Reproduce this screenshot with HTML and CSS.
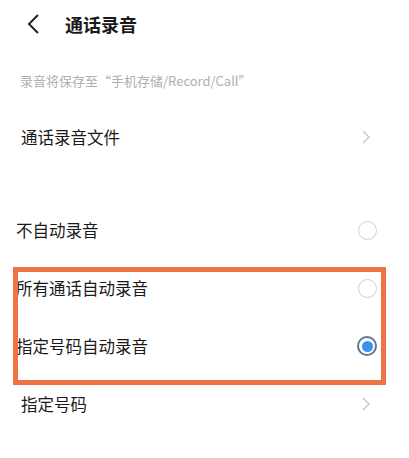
FILE: index.html
```html
<!DOCTYPE html>
<html>
<head>
    <meta charset="utf-8">
    <link rel="stylesheet" href="styles.css">
    <title>通话录音</title>
</head>
<body>
    <div class="page">
        <div class="header">
            <svg class="back" width="14" height="22" viewBox="0 0 14 22">
                <path d="M12 2 L3 11 L12 20" fill="none" stroke="#222" stroke-width="2"/>
            </svg>
            <p class="title">通话录音</p>
        </div>

        <p class="hint">录音将保存至“手机存储/Record/Call”</p>

        <div class="row link">
            <span class="label">通话录音文件</span>
            <svg class="chev" width="8" height="14" viewBox="0 0 8 14">
                <path d="M1 1 L7 7 L1 13" fill="none" stroke="#c4c4c4" stroke-width="1.3"/>
            </svg>
        </div>

        <div class="gap"></div>

        <div class="row opt">
            <span class="label">不自动录音</span>
            <span class="radio"></span>
        </div>
        <div class="row opt">
            <span class="label">所有通话自动录音</span>
            <span class="radio"></span>
        </div>
        <div class="row opt">
            <span class="label">指定号码自动录音</span>
            <span class="radio on"></span>
        </div>
        <div class="row link">
            <span class="label">指定号码</span>
            <svg class="chev" width="8" height="14" viewBox="0 0 8 14">
                <path d="M1 1 L7 7 L1 13" fill="none" stroke="#c4c4c4" stroke-width="1.3"/>
            </svg>
        </div>

        <!-- highlight box drawn over the two rows -->
        <div class="mark"></div>
    </div>
</body>
</html>
```

FILE: styles.css
```css
body{
    margin: 0;
    background-color: #fff;
    color: #1a1a1a;
    font-family: "Noto Sans CJK SC", "Noto Sans", sans-serif;
}

.page{
    position: relative;
    width: 409px;
    height: 458px;
    overflow: hidden;
}

.header{
    height: 48px;
    display: flex;
    align-items: center;
    padding-left: 26px;
    gap: 25px;
}

.title{
    margin: 0;
    font-size: 18px;
    font-weight: bold;
}

.hint{
    margin: 0;
    height: 60px;
    line-height: 66px;
    padding-left: 20px;
    font-size: 13px;
    color: #b0b0b0;
}

.row{
    height: 58px;
    display: flex;
    align-items: center;
    justify-content: space-between;
    font-size: 16.5px;
}

.link{
    padding-left: 21px;
    padding-right: 39px;
}

.opt{
    padding-left: 16px;
    padding-right: 32px;
}

.gap{
    height: 35px;
}

.radio{
    width: 17px;
    height: 17px;
    border: 1.5px solid #cfcfcf;
    border-radius: 50%;
    display: flex;
    align-items: center;
    justify-content: center;
}

.radio.on{
    border: 2px solid #5d7893;
    width: 16px;
    height: 16px;
}

.radio.on::after{
    content: "";
    width: 11px;
    height: 11px;
    border-radius: 50%;
    background-color: #3b8ff0;
}

.mark{
    position: absolute;
    left: 13px;
    top: 267px;
    width: 363px;
    height: 108px;
    border: 5px solid #ef7247;
}
```
